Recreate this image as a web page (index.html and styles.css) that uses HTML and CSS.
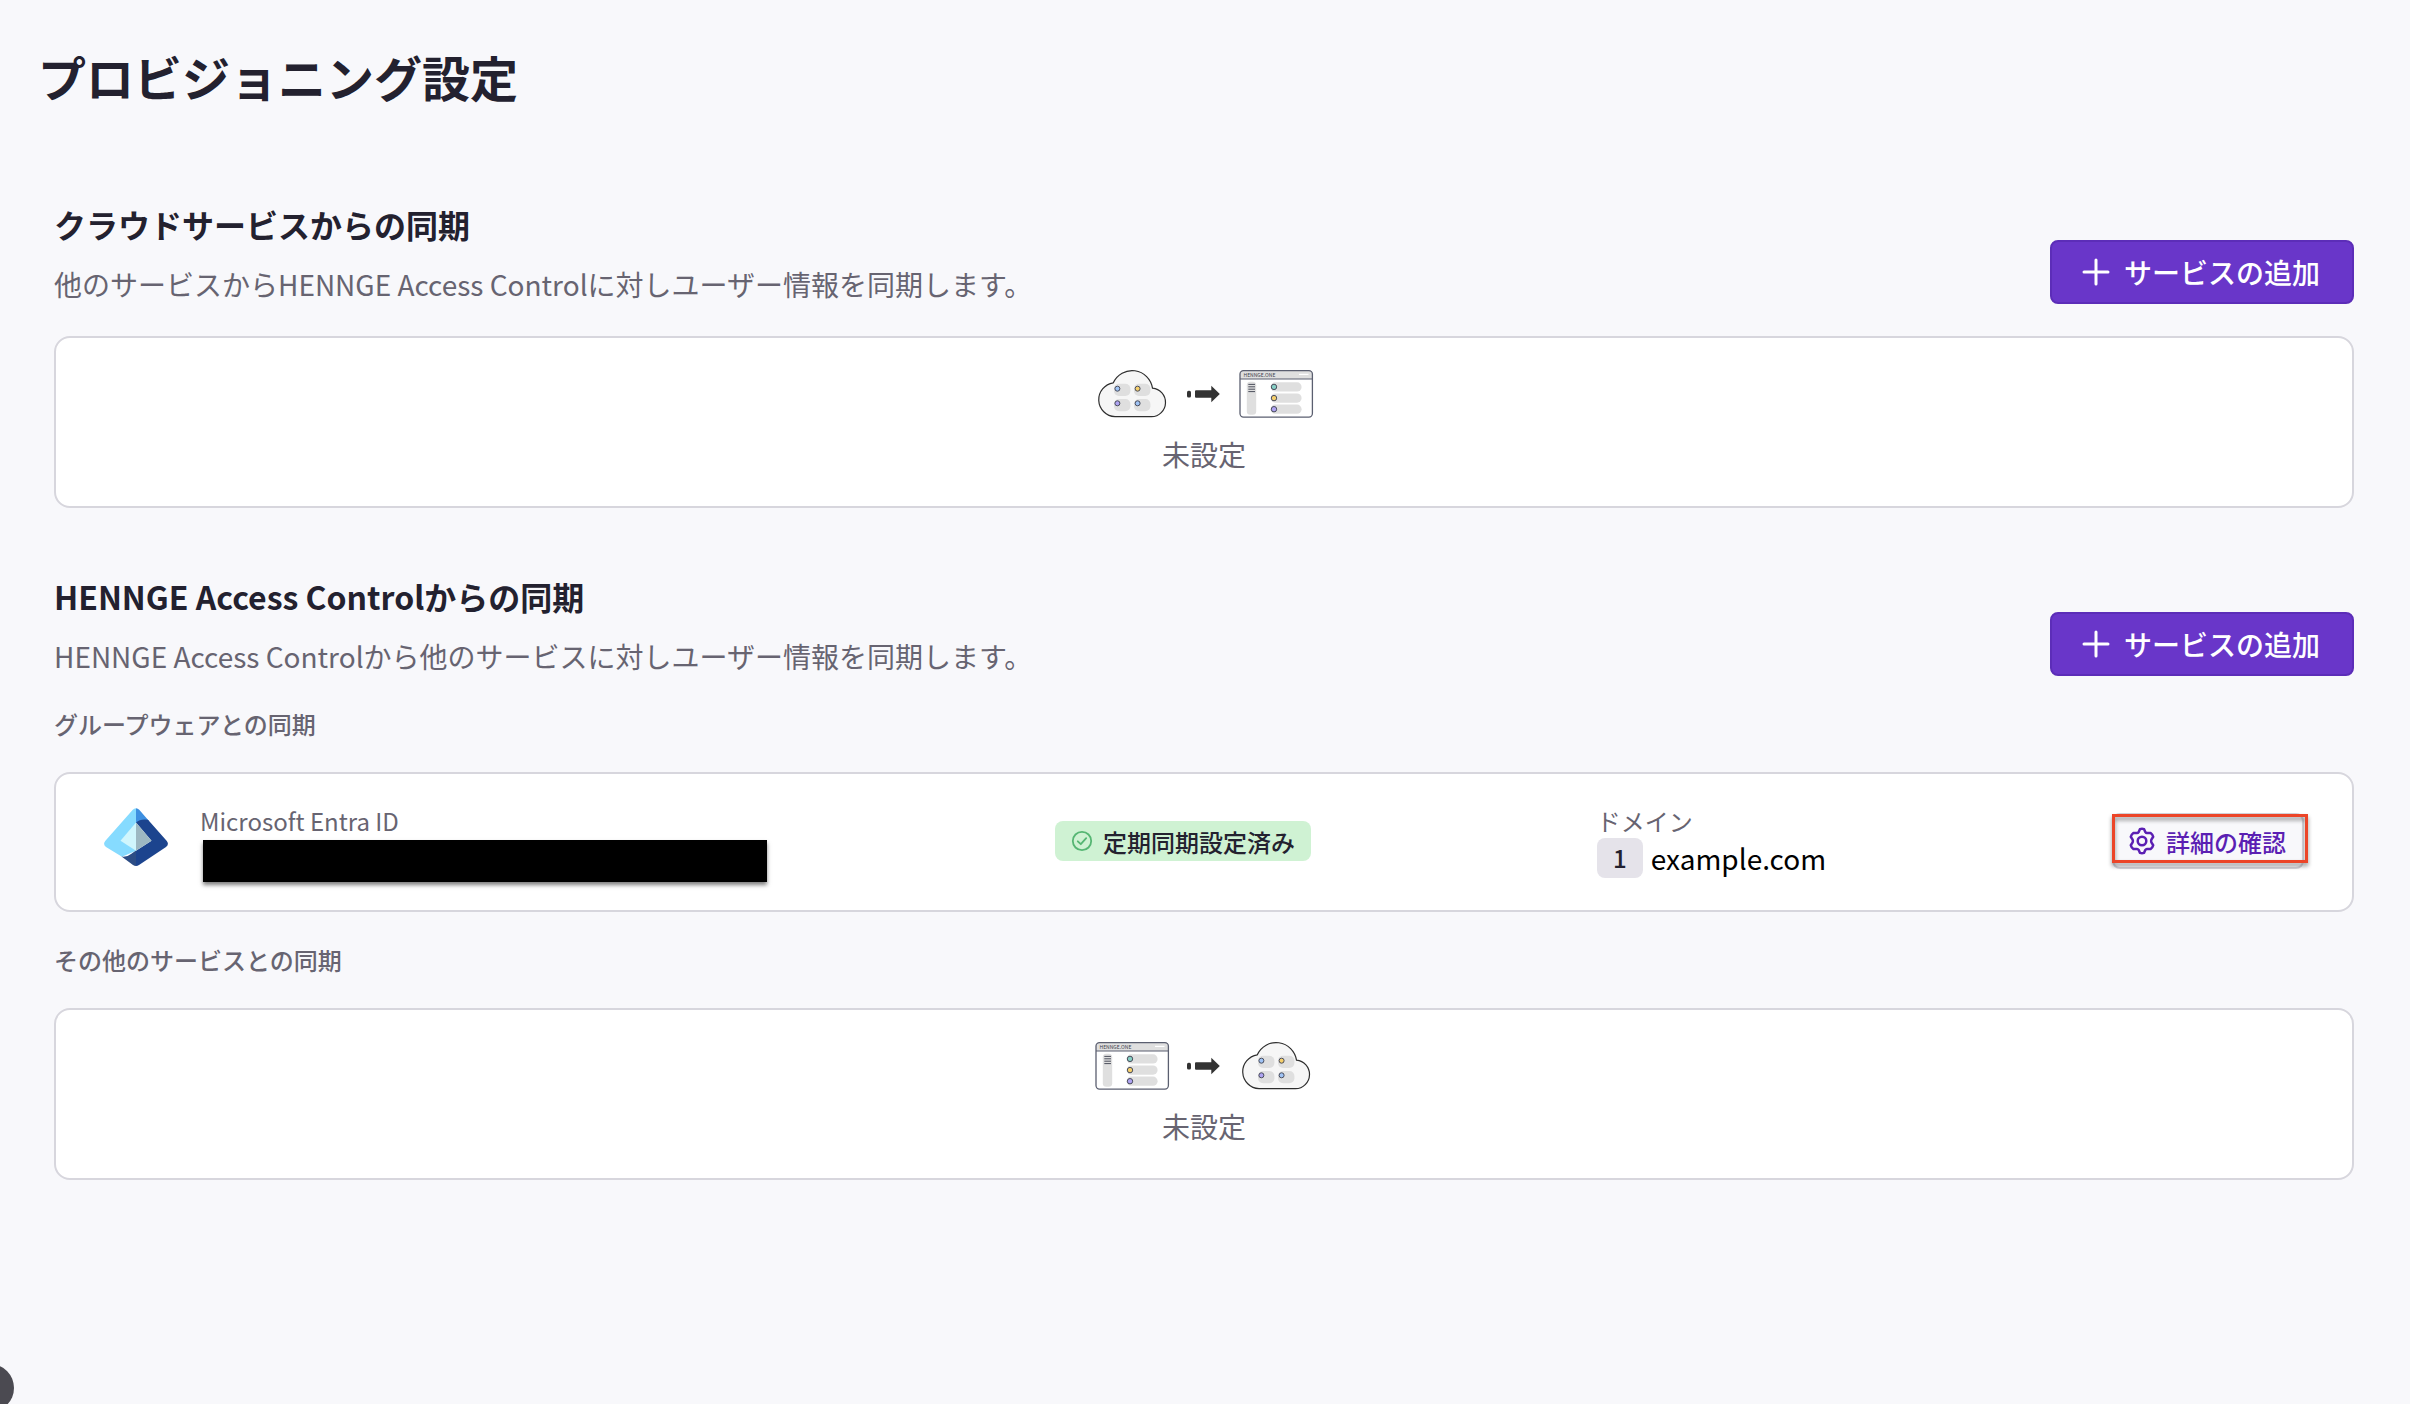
FILE: index.html
```html
<!DOCTYPE html>
<html lang="ja">
<head>
  <meta charset="UTF-8">
  <meta name="viewport" content="width=device-width, initial-scale=1.0">
  <title>プロビジョニング設定</title>
  <link rel="stylesheet" href="styles.css">
</head>
<body>
  <!-- Shared illustrations -->
  <svg class="sprite" aria-hidden="true">
    <symbol id="cloud" viewBox="0 0 76 52">
      <path d="M21 48.7A17.05 17.05 0 0 1 19.3 14.8A20.6 20.6 0 0 1 58.5 20.2A14.28 14.28 0 0 1 57.5 48.7Z" fill="#f6f6f6" stroke="#2e2e2e" stroke-width="1.2"/>
      <g fill="#dfdfdf">
        <rect x="20" y="15.7" width="16.4" height="12.3" rx="5"/>
        <rect x="40" y="15.7" width="16.4" height="12.3" rx="5"/>
        <rect x="20" y="31" width="16.4" height="12.3" rx="5"/>
        <rect x="40" y="31" width="16.4" height="12.3" rx="5"/>
      </g>
      <g stroke="#4a4d5c" stroke-width="1">
        <circle cx="23.4" cy="20.7" r="2.5" fill="#9fc3f5"/>
        <circle cx="43.6" cy="20.7" r="2.5" fill="#f5cf6b"/>
        <circle cx="23.4" cy="35.3" r="2.5" fill="#aea3f2"/>
        <circle cx="43.6" cy="35.3" r="2.5" fill="#9fc3f5"/>
      </g>
    </symbol>
    <symbol id="arrow" viewBox="0 0 36 52">
      <rect x="1" y="22.7" width="4" height="6.8" rx="1.6" fill="#333"/>
      <path d="M10 22.3H25.3V17.7L33.8 26L25.3 34.3V29.7H10Q9 29.7 9 28.7V23.3Q9 22.3 10 22.3Z" fill="#333"/>
    </symbol>
    <symbol id="window" viewBox="0 0 76 52">
      <rect x="2" y="2.6" width="72.4" height="46.5" rx="3.5" fill="#fff"/>
      <path d="M2 11V6Q2 2.6 5.5 2.6H71Q74.4 2.6 74.4 6V11Z" fill="#dfdfdf"/>
      <path d="M2 11H74.4" stroke="#5b5f70" stroke-width="1.2"/>
      <rect x="2" y="2.6" width="72.4" height="46.5" rx="3.5" fill="none" stroke="#5b5f70" stroke-width="1.3"/>
      <path d="M61 6.4H70.5" stroke="#fff" stroke-width="1.2"/>
      <rect x="8.8" y="13.8" width="9.4" height="33" rx="3.5" fill="#dfdfdf"/>
      <path d="M10.3 16.4H17M10.3 18.8H17M10.3 21.2H17M10.3 23.6H17" stroke="#4c4f5c" stroke-width="1"/>
      <g fill="#dfdfdf">
        <rect x="32.6" y="14.3" width="31" height="9.2" rx="4.6"/>
        <rect x="32.6" y="25.5" width="31" height="9.2" rx="4.6"/>
        <rect x="32.6" y="36.6" width="31" height="9.2" rx="4.6"/>
      </g>
      <g stroke="#4a4d5c" stroke-width="1">
        <circle cx="36" cy="18.9" r="2.7" fill="#86cfc4"/>
        <circle cx="36" cy="30.1" r="2.7" fill="#f5cf6b"/>
        <circle cx="36" cy="41.2" r="2.7" fill="#aea3f2"/>
      </g>
    </symbol>
    <symbol id="plus" viewBox="0 0 28 28">
      <path d="M14 2V26M2 14H26" fill="none" stroke="currentColor" stroke-width="3" stroke-linecap="round"/>
    </symbol>
  </svg>

  <main class="page">
    <h1>プロビジョニング設定</h1>

    <!-- Inbound sync -->
    <section class="section">
      <div class="section-head">
        <div>
          <h2>クラウドサービスからの同期</h2>
          <p class="description">他のサービスからHENNGE Access Controlに対しユーザー情報を同期します。</p>
        </div>
        <button class="btn-primary" type="button"><svg class="icon-plus" aria-hidden="true"><use href="#plus"/></svg>サービスの追加</button>
      </div>
      <div class="card empty">
        <div class="flow">
          <svg class="flow-item"><use href="#cloud"/></svg>
          <svg class="flow-arrow"><use href="#arrow"/></svg>
          <svg class="flow-item"><use href="#window"/><text class="window-title" x="5.5" y="8.8">HENNGE.ONE</text></svg>
        </div>
        <p class="empty-text">未設定</p>
      </div>
    </section>

    <!-- Outbound sync -->
    <section class="section">
      <div class="section-head">
        <div>
          <h2>HENNGE Access Controlからの同期</h2>
          <p class="description">HENNGE Access Controlから他のサービスに対しユーザー情報を同期します。</p>
        </div>
        <button class="btn-primary" type="button"><svg class="icon-plus" aria-hidden="true"><use href="#plus"/></svg>サービスの追加</button>
      </div>

      <h3>グループウェアとの同期</h3>
      <div class="card service">
        <svg class="service-logo" viewBox="0 0 66 58" role="img" aria-label="Microsoft Entra ID">
          <path d="M33 .3Q31 .3 29.8 1.8L2.2 33Q-.4 36.3 3 39L19 48.8L33 42.7Z" fill="#86dbff"/>
          <path d="M33 .3Q35 .3 36.2 1.8L46 13L33 15Z" fill="#3e8fe0"/>
          <path d="M33 14.6Q37.5 10.5 45 11.8L63.8 33Q66.4 36.3 63 39L36 57Q34.6 57.9 33 57.9V42.7L48.5 32.7Z" fill="#1c448e"/>
          <path d="M18.5 48.6Q24 49.4 28 46L33 42.5V57.9Q31.4 57.9 30 57Z" fill="#2c4d85"/>
          <path d="M33 14.4L17.5 32.7L33 42.7Z" fill="#d0f6fd"/>
          <path d="M33 14.4L48.5 32.7L33 42.7Z" fill="#9db8c2"/>
        </svg>
        <div>
          <div class="label">Microsoft Entra ID</div>
          <div class="account"><span class="mask"></span></div>
        </div>
        <div>
          <span class="status">
            <svg class="icon-check" viewBox="0 0 22 22" fill="none" stroke="#56b673" stroke-width="1.8" stroke-linecap="round" stroke-linejoin="round" aria-hidden="true">
              <circle cx="11" cy="11" r="9.2"/>
              <path d="M6.8 11.3L9.8 14.2L15.2 8.2"/>
            </svg>
            定期同期設定済み
          </span>
        </div>
        <div class="domain-cell">
          <div>
            <div class="label">ドメイン</div>
            <div class="domain"><span class="count">1</span>example.com</div>
          </div>
          <div class="detail">
            <button class="btn-secondary" type="button">
              <svg class="icon-gear" viewBox="0 0 28 28" fill="none" stroke="currentColor" stroke-width="2.5" stroke-linejoin="round" aria-hidden="true">
                <path d="M11.9 2.2Q14 1.4 16.1 2.2L17.4 5.2Q18 6.2 19.2 6.1L22.6 5.9Q24.6 7.3 25.2 9.8L23.4 12.6Q22.8 14 23.4 15.4L25.2 18.2Q24.6 20.7 22.6 22.1L19.2 21.9Q18 21.8 17.4 22.8L16.1 25.8Q14 26.6 11.9 25.8L10.6 22.8Q10 21.8 8.8 21.9L5.4 22.1Q3.4 20.7 2.8 18.2L4.6 15.4Q5.2 14 4.6 12.6L2.8 9.8Q3.4 7.3 5.4 5.9L8.8 6.1Q10 6.2 10.6 5.2Z"/>
                <circle cx="14" cy="14" r="4.3"/>
              </svg>
              詳細の確認
            </button>
            <span class="highlight"></span>
          </div>
        </div>
      </div>

      <h3>その他のサービスとの同期</h3>
      <div class="card empty">
        <div class="flow">
          <svg class="flow-item"><use href="#window"/><text class="window-title" x="5.5" y="8.8">HENNGE.ONE</text></svg>
          <svg class="flow-arrow"><use href="#arrow"/></svg>
          <svg class="flow-item"><use href="#cloud"/></svg>
        </div>
        <p class="empty-text">未設定</p>
      </div>
    </section>
  </main>

  <button class="floating" type="button" aria-label="ヘルプ"></button>
</body>
</html>
```
FILE: styles.css
```css
* {
  box-sizing: border-box;
}

body {
  margin: 0;
  font-family: "Noto Sans CJK JP", "Noto Sans", sans-serif;
  background-color: #f8f8fb;
  color: #23212f;
}

h1, h2, h3, p {
  margin: 0;
}

button {
  font-family: inherit;
  cursor: pointer;
}

.sprite {
  position: absolute;
  width: 0;
  height: 0;
}

.page {
  padding: 40px 56px 80px 54px;
}

h1 {
  margin: 0 0 88px -16px;
  font-size: 48px;
  line-height: 72px;
}

h2 {
  font-size: 32px;
  line-height: 48px;
}

h3 {
  margin: 30px 0;
  font-size: 24px;
  font-weight: 500;
  line-height: 36px;
  color: #676471;
}

/* Sections */
.section + .section {
  margin-top: 64px;
}

.section-head {
  display: flex;
  justify-content: space-between;
  align-items: flex-end;
}

.description {
  margin-top: 16px;
  font-size: 28px;
  line-height: 40px;
  color: #676471;
}

.btn-primary {
  display: flex;
  align-items: center;
  gap: 14px;
  height: 64px;
  padding: 0 32px 0 30px;
  border: 2px solid #5c2db8;
  border-radius: 8px;
  background-color: #6936c9;
  color: white;
  font-size: 28px;
  font-weight: 500;
}

.icon-plus {
  width: 28px;
  height: 28px;
}

/* Cards */
.card {
  border: 2px solid #d7d6dd;
  border-radius: 16px;
  background-color: white;
}

.empty {
  padding: 30px 30px 32px;
  text-align: center;
}

.section-head + .empty {
  margin-top: 32px;
}

.flow {
  display: flex;
  justify-content: center;
  gap: 16px;
}

.flow-item {
  width: 76px;
  height: 52px;
}

.flow-arrow {
  width: 36px;
  height: 52px;
}

.window-title {
  font-size: 5px;
  fill: #3b3d4a;
}

.empty-text {
  margin-top: 14px;
  font-size: 28px;
  line-height: 40px;
  color: #676471;
}

/* Connected service */
.service {
  display: grid;
  grid-template-columns: 97px 41fr 26fr 34fr;
  align-items: center;
  padding: 30px 48px 32px 47px;
}

.service-logo {
  width: 66px;
  height: 58px;
  margin-bottom: 8px;
}

.label {
  font-size: 24px;
  line-height: 34px;
  color: #676471;
}

.account {
  position: relative;
  height: 40px;
}

.mask {
  position: absolute;
  top: 2px;
  left: 3px;
  width: 564px;
  height: 42px;
  background-color: black;
  box-shadow: 0 3px 4px rgba(0, 0, 0, 0.5);
}

.status {
  display: inline-flex;
  align-items: center;
  gap: 10px;
  height: 40px;
  margin-left: 1px;
  padding: 0 16px;
  border-radius: 8px;
  background-color: #cff2d3;
  font-size: 24px;
  font-weight: 500;
}

.icon-check {
  width: 22px;
  height: 22px;
}

.domain-cell {
  display: flex;
  justify-content: space-between;
  align-items: center;
  padding-left: 1px;
}

.domain {
  display: flex;
  align-items: center;
  gap: 8px;
  height: 40px;
  color: black;
  font-size: 28px;
}

.count {
  width: 46px;
  border-radius: 8px;
  background-color: #e5e3ea;
  color: #23212f;
  font-size: 24px;
  font-weight: 500;
  line-height: 40px;
  text-align: center;
}

.detail {
  position: relative;
}

.btn-secondary {
  display: flex;
  align-items: center;
  gap: 10px;
  height: 56px;
  padding: 0 16px 0 14px;
  border: 2px solid #d7d6dd;
  border-radius: 8px;
  background-color: #f8f8fb;
  color: #5b1fb3;
  font-size: 24px;
  font-weight: 500;
}

.icon-gear {
  width: 28px;
  height: 28px;
}

/* Red frame over the detail button */
.highlight {
  position: absolute;
  top: 1px;
  left: 0;
  right: -4px;
  height: 49px;
  border: 3px solid #ec4528;
  filter: drop-shadow(0 3px 2px rgba(0, 0, 0, 0.45));
  pointer-events: none;
}

.floating {
  position: fixed;
  left: -34px;
  bottom: -8px;
  width: 48px;
  height: 48px;
  border: none;
  border-radius: 50%;
  background-color: #4b4a51;
}
```
